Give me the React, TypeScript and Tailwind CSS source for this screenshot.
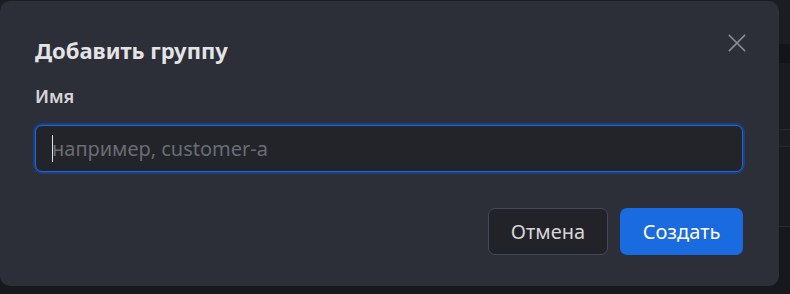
import React from "react";

export default function App() {
  return (
    <div
      className="relative w-[790px] h-[294px] overflow-hidden bg-[#1a1b1f]"
      style={{ fontFamily: '"Noto Sans", "Open Sans", sans-serif' }}
    >
      {/* page behind */}
      <div className="absolute inset-0 flex flex-col">
        <div className="h-[44px] bg-[#1c1d21]" />
        <div className="h-[19px] bg-[#141518]" />
        <div className="h-[67px] bg-[#1a1b1f] border-b border-[#24262b]" />
        <div className="h-[17px] bg-[#1c1d21] border-b border-[#24262b]" />
        <div className="h-[80px] bg-[#1a1b1f] border-b border-[#2a2c32]" />
        <div className="flex-1 bg-[#17181b]" />
      </div>

      {/* dialog */}
      <div className="absolute left-0 top-[1px] w-[779px] h-[285px] rounded-[10px] bg-[#2c2f37] px-[35px] pt-[34px]">
        <div className="flex items-start justify-between">
          <h2 className="text-[22px] leading-[30px] font-bold text-[#e4e4e7]">
            Добавить группу
          </h2>
          <button className="mr-[-2px] mt-[-1px] w-[18px] h-[18px] text-[#8b8d93]">
            <svg viewBox="0 0 18 18" width="18" height="18" fill="none" stroke="currentColor" strokeWidth="1.6" strokeLinecap="square">
              <path d="M1.5 1.5L16.5 16.5M16.5 1.5L1.5 16.5" />
            </svg>
          </button>
        </div>
        <div className="mt-[19px] text-[18px] leading-[24px] font-semibold text-[#d4d4d8]">Имя</div>
        <div className="mt-[17px] h-[47px] w-[708px] rounded-[7px] border border-[#2166d9] bg-[#23242a] shadow-[0_0_0_2px_#1d3f7a] flex items-center pl-[16px]">
          <span className="w-px h-[27px] bg-[#e4e4e7]" />
          <span className="text-[20px] text-[#696c74] -ml-px">например, customer-a</span>
        </div>
        <div className="mt-[36px] flex justify-end gap-[12px] pr-[1px]">
          <button className="h-[47px] w-[120px] rounded-[7px] border border-[#454857] bg-[#222328] text-[20px] text-[#d6d6da]">
            Отмена
          </button>
          <button className="h-[47px] w-[123px] rounded-[7px] bg-[#1a6ae0] text-[20px] text-white">
            Создать
          </button>
        </div>
      </div>
    </div>
  );
}
